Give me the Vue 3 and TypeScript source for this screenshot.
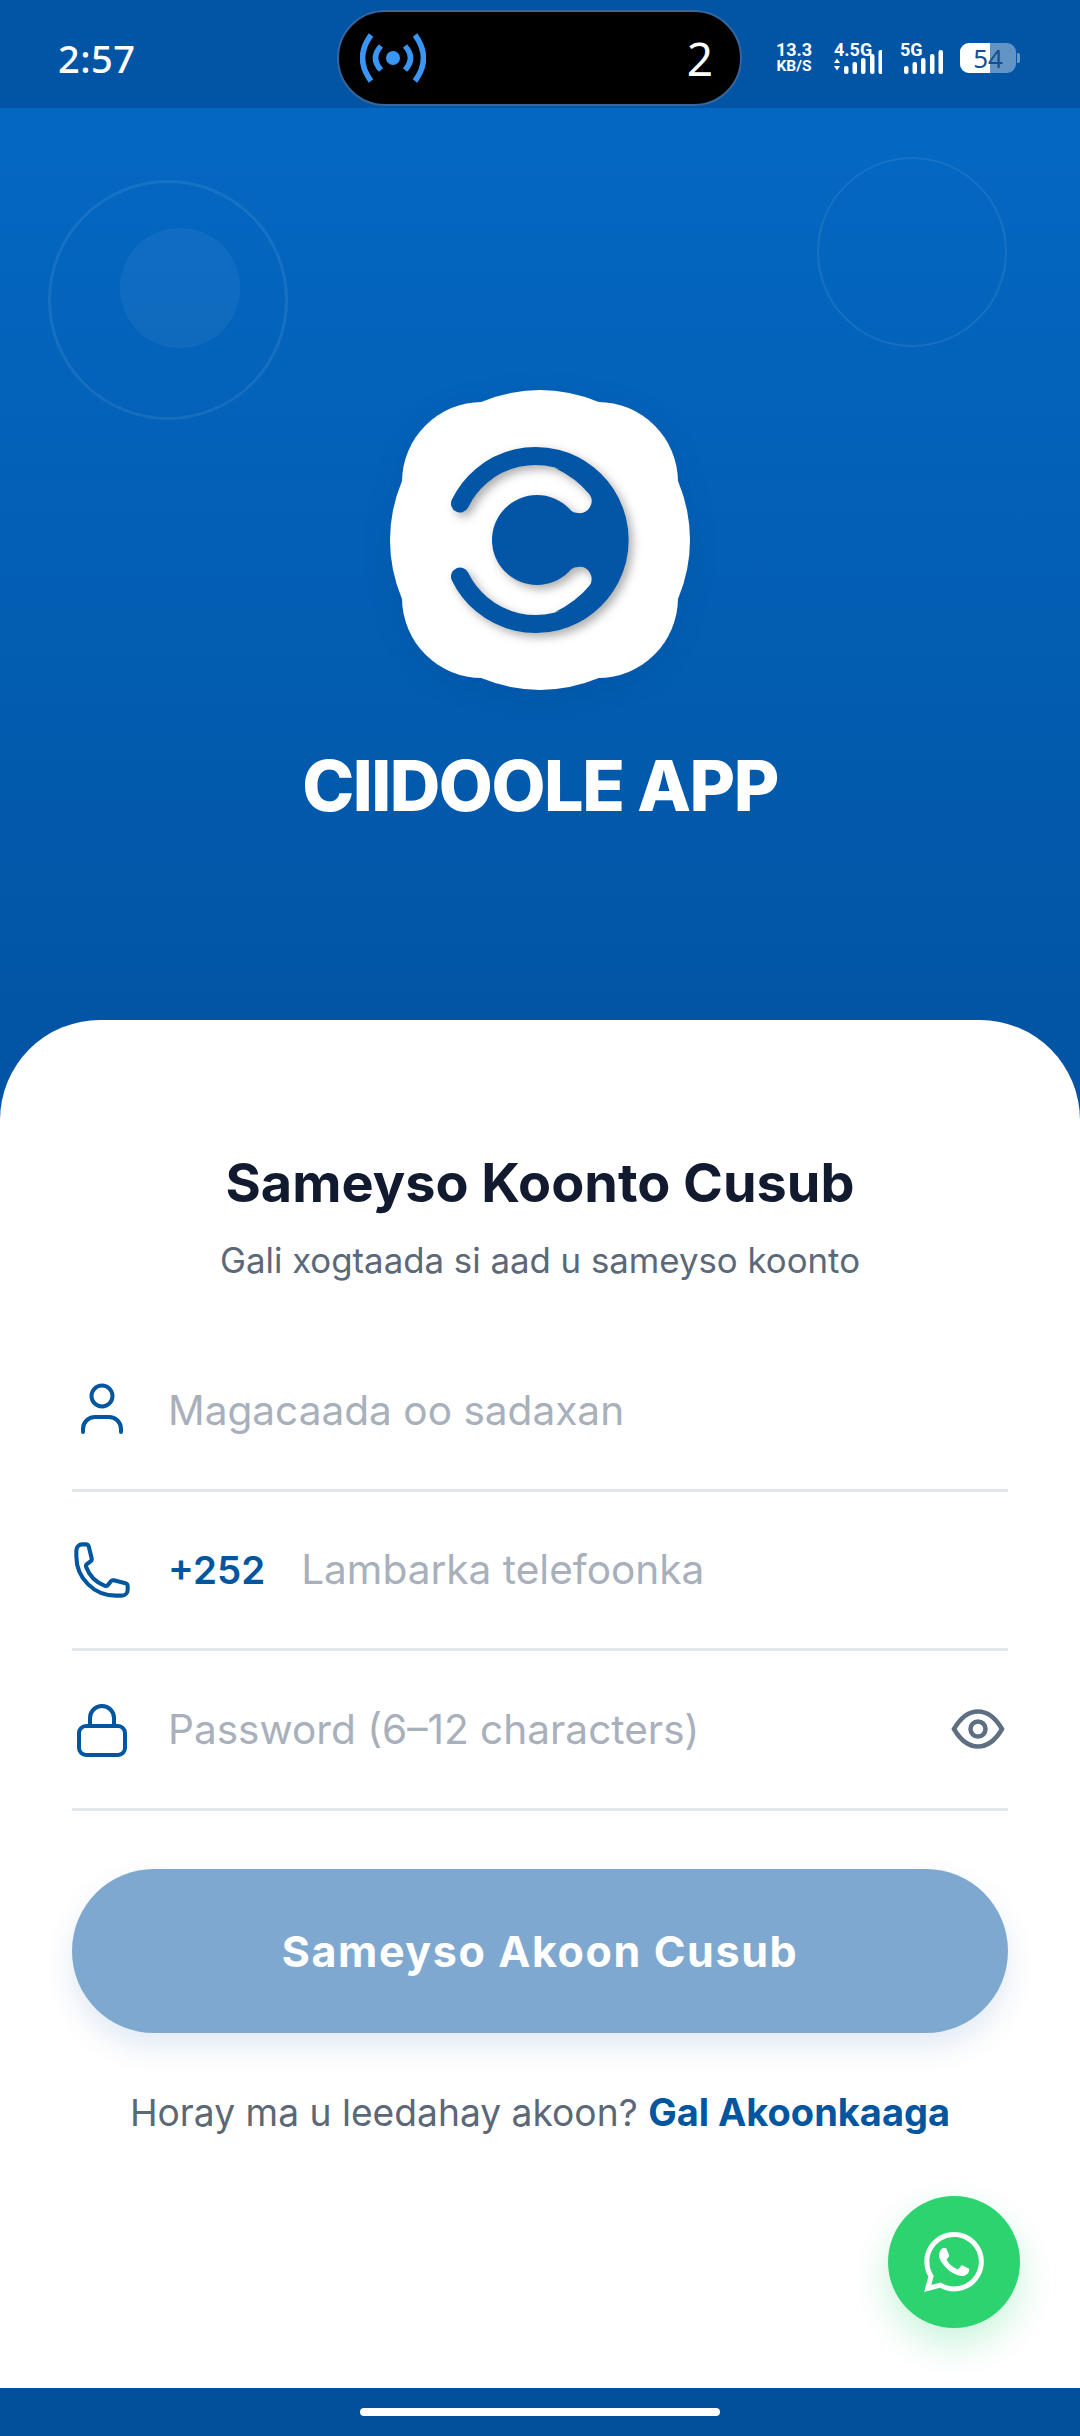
<template>
  <div class="screen">
    <!-- Status bar -->
    <div class="status-bar">
      <span class="clock">2:57</span>
      <div class="island">
        <svg class="hotspot" width="66" height="50" viewBox="0 0 66 50" fill="none" stroke="#3a96f5" stroke-width="5.5">
          <circle cx="33" cy="25" r="7" fill="#3a96f5" stroke="none" />
          <path d="M21 13 Q10 25 21 37" />
          <path d="M45 13 Q56 25 45 37" />
          <path d="M11 2 Q-6 25 11 48" />
          <path d="M55 2 Q72 25 55 48" />
        </svg>
        <span class="island-count">2</span>
      </div>
      <div class="indicators">
        <div class="speed">
          <span>13.3</span>
          <span>KB/S</span>
        </div>
        <div class="network net-a">
          <span class="net-label">4.5G</span>
          <svg width="50" height="24" viewBox="0 0 50 24" fill="#fff">
            <path d="M2 13 L5 8.5 L8 13Z M2 16 L8 16 L5 20.5Z" />
            <rect v-for="bar in signalBars" :key="bar.x" :x="bar.x + 12" :y="bar.y" width="4.5" :height="24 - bar.y" rx="2" />
          </svg>
        </div>
        <div class="network net-b">
          <span class="net-label">5G</span>
          <svg width="40" height="24" viewBox="0 0 40 24" fill="#fff">
            <rect v-for="bar in signalBars" :key="bar.x" :x="bar.x + 1" :y="bar.y" width="4.5" :height="24 - bar.y" rx="2" />
          </svg>
        </div>
        <div class="battery">
          <div class="battery-level"></div>
          <span class="battery-text">54</span>
        </div>
        <div class="battery-nub"></div>
      </div>
    </div>

    <!-- Hero with logo -->
    <div class="hero">
      <div class="deco ring-left"></div>
      <div class="deco dot-left"></div>
      <div class="deco ring-right"></div>

      <svg class="logo" width="300" height="300" viewBox="0 0 300 300">
        <circle cx="150" cy="150" r="150" fill="#fff" />
        <rect x="12" y="12" width="276" height="276" rx="80" fill="#fff" />
        <g class="logo-mark" fill="#0256a5">
          <path d="M70 113.5 A84 84 0 1 1 70 186.5" fill="none" stroke="#0256a5" stroke-width="18" stroke-linecap="round" />
          <circle cx="147" cy="150" r="45" />
          <path d="M173 114 Q181 123 188 123 A12 12 0 0 0 199.4 104.2 Q186 88 165 78 L205 85 L226 110 L226 190 L205 215 L165 222 Q186 212 199.4 195.8 A12 12 0 0 0 188 177 Q181 177 173 186Z" />
        </g>
      </svg>
      <h1 class="app-name">CIIDOOLE APP</h1>
    </div>

    <!-- Register card -->
    <div class="card">
      <h2 class="card-title">Sameyso Koonto Cusub</h2>
      <p class="card-sub">Gali xogtaada si aad u sameyso koonto</p>

      <div class="fields">
        <div class="field">
          <svg class="field-icon" width="60" height="60" viewBox="0 0 60 60" fill="none" stroke="#02569f" stroke-width="4" stroke-linecap="round">
            <circle cx="30" cy="16" r="10.5" />
            <path d="M11 52 v-3 a12 12 0 0 1 12-12 h14 a12 12 0 0 1 12 12 v3" />
          </svg>
          <span class="placeholder">Magacaada oo sadaxan</span>
        </div>
        <div class="field">
          <svg class="field-icon" width="60" height="60" viewBox="0.6 0.6 22.8 22.8" fill="none" stroke="#02569f" stroke-width="1.55" stroke-linejoin="round">
            <path d="M2.25 6.75c0 8.284 6.716 15 15 15h2.25a2.25 2.25 0 0 0 2.25-2.25v-1.372c0-.516-.351-.966-.852-1.091l-4.423-1.106c-.44-.11-.902.055-1.173.417l-.97 1.293c-.282.376-.769.542-1.21.38a12.035 12.035 0 0 1-7.143-7.143c-.162-.441.004-.928.38-1.21l1.293-.97c.363-.271.527-.734.417-1.173L6.963 3.102a1.125 1.125 0 0 0-1.091-.852H4.5A2.25 2.25 0 0 0 2.25 4.5v2.25Z" />
          </svg>
          <span class="dial-code">+252</span>
          <span class="placeholder">Lambarka telefoonka</span>
        </div>
        <div class="field">
          <svg class="field-icon" width="60" height="60" viewBox="0 0 60 60" fill="none" stroke="#02569f" stroke-width="4">
            <rect x="7" y="27" width="46" height="29" rx="7" />
            <path d="M18 27 v-8 a12 12 0 0 1 24 0 v8" />
          </svg>
          <span class="placeholder">Password (6–12 characters)</span>
          <svg class="eye" width="56" height="44" viewBox="0 0 56 44" fill="none" stroke="#5f6f82" stroke-width="4.5">
            <path d="M4 22 C11 10 19 4.5 28 4.5 S45 10 52 22 C45 34 37 39.5 28 39.5 S11 34 4 22Z" />
            <circle cx="28" cy="22" r="7.5" />
          </svg>
        </div>
      </div>

      <button class="submit" type="button">Sameyso Akoon Cusub</button>

      <p class="login-line">Horay ma u leedahay akoon? <span class="login-link">Gal Akoonkaaga</span></p>

      <div class="whatsapp">
        <svg width="60" height="60" viewBox="0 0 24 24" fill="#fff">
          <path d="M17.472 14.382c-.297-.149-1.758-.867-2.03-.967-.273-.099-.471-.148-.67.15-.197.297-.767.966-.94 1.164-.173.199-.347.223-.644.075-.297-.15-1.255-.463-2.39-1.475-.883-.788-1.48-1.761-1.653-2.059-.173-.297-.018-.458.13-.606.134-.133.298-.347.446-.52.149-.174.198-.298.298-.497.099-.198.05-.371-.025-.52-.075-.149-.669-1.612-.916-2.207-.242-.579-.487-.5-.669-.51-.173-.008-.371-.01-.57-.01-.198 0-.52.074-.792.372-.272.297-1.04 1.016-1.04 2.479 0 1.462 1.065 2.875 1.213 3.074.149.198 2.096 3.2 5.077 4.487.709.306 1.262.489 1.694.625.712.227 1.36.195 1.871.118.571-.085 1.758-.719 2.006-1.413.248-.694.248-1.289.173-1.413-.074-.124-.272-.198-.57-.347m-5.421 7.403h-.004a9.87 9.87 0 01-5.031-1.378l-.361-.214-3.741.982.998-3.648-.235-.374a9.86 9.86 0 01-1.51-5.26c.001-5.45 4.436-9.884 9.888-9.884 2.64 0 5.122 1.03 6.988 2.898a9.825 9.825 0 012.893 6.994c-.003 5.45-4.437 9.884-9.885 9.884m8.413-18.297A11.815 11.815 0 0012.05 0C5.495 0 .16 5.335.157 11.892c0 2.096.547 4.142 1.588 5.945L.057 24l6.305-1.654a11.882 11.882 0 005.683 1.448h.005c6.554 0 11.89-5.335 11.893-11.893a11.821 11.821 0 00-3.48-8.413z" />
        </svg>
      </div>
    </div>

    <!-- Nav bar -->
    <div class="nav-bar">
      <div class="home-pill"></div>
    </div>
  </div>
</template>

<script setup lang="ts">
const signalBars = [
  { x: 0, y: 16 },
  { x: 8.5, y: 12 },
  { x: 17, y: 8 },
  { x: 26, y: 4 },
  { x: 34.5, y: 0 },
];
</script>

<style>
body {
  margin: 0;
}
</style>

<style scoped>
.screen {
  width: 1080px;
  height: 2436px;
  display: flex;
  flex-direction: column;
  overflow: hidden;
  background: #fff;
  font-family: Inter, "Noto Sans", sans-serif;
}

.status-bar {
  height: 108px;
  flex-shrink: 0;
  display: flex;
  align-items: flex-start;
  background: #0254a4;
  color: #fff;
  position: relative;
  z-index: 1;
}

.clock {
  flex: 0 0 337px;
  padding-left: 58px;
  box-sizing: border-box;
  margin-top: 36px;
  font-family: "Noto Sans", sans-serif;
  font-size: 38px;
  font-weight: 500;
  line-height: 44px;
  letter-spacing: 0.5px;
}

.island {
  flex: 0 0 405px;
  height: 96px;
  margin-top: 10px;
  box-sizing: border-box;
  display: flex;
  align-items: center;
  justify-content: space-between;
  padding: 0 27px 0 21px;
  background: #000;
  border: 2px solid #34669f;
  border-radius: 48px;
}

.island-count {
  font-family: "Noto Sans", sans-serif;
  font-size: 46px;
  line-height: 50px;
}

.indicators {
  display: flex;
  align-items: flex-start;
  flex-shrink: 0;
  margin-top: 43px;
  margin-left: 31px;
}

.speed {
  width: 42px;
  display: flex;
  flex-direction: column;
  align-items: center;
  margin-top: -2px;
  font-family: Roboto, sans-serif;
  font-weight: 700;
  font-size: 15.5px;
  line-height: 17px;
}

.speed span:first-child {
  font-size: 18px;
}

.network {
  position: relative;
  height: 31px;
  display: flex;
  align-items: flex-end;
}

.net-a {
  margin-left: 17px;
}

.net-b {
  margin-left: 21px;
}

.net-label {
  position: absolute;
  top: -1px;
  font-family: Roboto, sans-serif;
  font-weight: 700;
  font-size: 18px;
  line-height: 16px;
}

.net-a .net-label {
  left: 2px;
}

.net-b .net-label {
  left: -3px;
}

.battery {
  position: relative;
  width: 56px;
  height: 30px;
  margin-left: 17px;
  border-radius: 9px;
  background: rgba(255, 255, 255, 0.38);
}

.battery-level {
  position: absolute;
  left: 0;
  top: 0;
  bottom: 0;
  width: 30px;
  border-radius: 9px 0 0 9px;
  background: #fff;
}

.battery-text {
  position: relative;
  display: block;
  text-align: center;
  font-family: "Noto Sans", sans-serif;
  font-size: 26px;
  line-height: 30px;
  color: #13508f;
}

.battery-nub {
  width: 3px;
  height: 10px;
  margin: 10px 0 0 1px;
  border-radius: 0 2px 2px 0;
  background: rgba(255, 255, 255, 0.4);
}

.hero {
  position: relative;
  height: 1012px;
  flex-shrink: 0;
  display: flex;
  flex-direction: column;
  align-items: center;
  box-sizing: border-box;
  padding-top: 282px;
  background: linear-gradient(180deg, #0468c3 0%, #0255a5 90%);
}

.deco {
  position: absolute;
  border-radius: 50%;
  box-sizing: border-box;
}

.ring-left {
  left: 48px;
  top: 72px;
  width: 240px;
  height: 240px;
  border: 3px solid rgba(255, 255, 255, 0.08);
}

.dot-left {
  left: 120px;
  top: 120px;
  width: 120px;
  height: 120px;
  background: rgba(255, 255, 255, 0.05);
}

.ring-right {
  left: 817px;
  top: 49px;
  width: 190px;
  height: 190px;
  border: 2px solid rgba(255, 255, 255, 0.08);
}

.logo {
  overflow: visible;
  filter: drop-shadow(0 6px 14px rgba(0, 40, 90, 0.1));
}

.logo-mark {
  filter: drop-shadow(4px 4px 5px rgba(0, 0, 0, 0.32));
}

.app-name {
  margin: 58px 0 0;
  font-size: 70px;
  line-height: 76px;
  font-weight: 800;
  letter-spacing: -1.5px;
  color: #fff;
}

.card {
  position: relative;
  flex: 1;
  margin-top: -100px;
  padding: 131px 72px 0;
  background: #fff;
  border-radius: 100px 100px 0 0;
}

.card-title {
  margin: 0;
  text-align: center;
  font-size: 54px;
  line-height: 64px;
  font-weight: 700;
  color: #111a2e;
}

.card-sub {
  margin: 21px 0 0;
  text-align: center;
  font-size: 34.8px;
  line-height: 48px;
  color: #5b6878;
}

.fields {
  margin-top: 48px;
}

.field {
  height: 159.5px;
  box-sizing: border-box;
  display: flex;
  align-items: center;
  border-bottom: 3px solid #e3e7eb;
}

.field-icon {
  flex-shrink: 0;
  margin-right: 36px;
}

.placeholder {
  font-size: 40.6px;
  color: #a8b0bc;
}

.dial-code {
  margin-right: 36px;
  font-size: 38.5px;
  font-weight: 600;
  color: #02569f;
}

.eye {
  margin-left: auto;
  margin-right: 2px;
}

.submit {
  display: block;
  width: 100%;
  height: 164px;
  margin-top: 58px;
  border: none;
  border-radius: 82px;
  background: #7fa8d1;
  box-shadow: 0 14px 30px rgba(2, 84, 164, 0.12);
  color: #fff;
  font-family: inherit;
  font-size: 43px;
  font-weight: 700;
  letter-spacing: 1.6px;
}

.login-line {
  margin: 55px 0 0;
  text-align: center;
  font-size: 37.2px;
  line-height: 48px;
  color: #5b6878;
}

.login-link {
  font-size: 38px;
  font-weight: 700;
  color: #02569f;
}

.whatsapp {
  position: absolute;
  right: 60px;
  bottom: 60px;
  width: 132px;
  height: 132px;
  display: flex;
  align-items: center;
  justify-content: center;
  border-radius: 50%;
  background: #2dd36f;
  box-shadow: 0 16px 36px rgba(45, 211, 111, 0.25);
}

.nav-bar {
  height: 48px;
  flex-shrink: 0;
  background: #02509c;
}

.home-pill {
  width: 360px;
  height: 8px;
  margin: 20px auto 0;
  border-radius: 4px;
  background: #fff;
}
</style>
